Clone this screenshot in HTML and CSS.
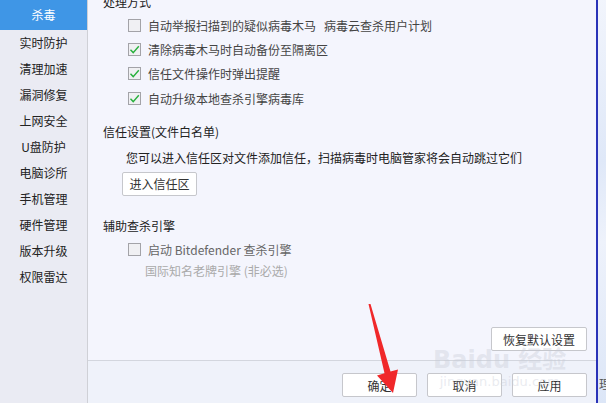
FILE: index.html
```html
<!DOCTYPE html>
<html lang="zh-CN">
<head>
<meta charset="utf-8">
<link rel="stylesheet" href="styles.css">
</head>
<body>
<div class="window">
  <nav class="sidebar">
    <div class="nav-item active">杀毒</div>
    <div class="nav-item">实时防护</div>
    <div class="nav-item">清理加速</div>
    <div class="nav-item">漏洞修复</div>
    <div class="nav-item">上网安全</div>
    <div class="nav-item">U盘防护</div>
    <div class="nav-item">电脑诊所</div>
    <div class="nav-item">手机管理</div>
    <div class="nav-item">硬件管理</div>
    <div class="nav-item">版本升级</div>
    <div class="nav-item">权限雷达</div>
  </nav>
  <main class="main">
    <section class="content">
      <div class="section-title first">处理方式</div>
      <div class="options">
        <label class="option"><span class="box"></span><span>自动举报扫描到的疑似病毒木马&nbsp;&nbsp;&nbsp;病毒云查杀用户计划</span></label>
        <label class="option"><span class="box checked"><svg viewBox="0 0 13 13" width="13" height="13"><path d="M2.5 6.8 L5.2 9.6 L10.8 3.2" fill="none" stroke="#27b03c" stroke-width="1.4"/></svg></span><span>清除病毒木马时自动备份至隔离区</span></label>
        <label class="option"><span class="box checked"><svg viewBox="0 0 13 13" width="13" height="13"><path d="M2.5 6.8 L5.2 9.6 L10.8 3.2" fill="none" stroke="#27b03c" stroke-width="1.4"/></svg></span><span>信任文件操作时弹出提醒</span></label>
        <label class="option"><span class="box checked"><svg viewBox="0 0 13 13" width="13" height="13"><path d="M2.5 6.8 L5.2 9.6 L10.8 3.2" fill="none" stroke="#27b03c" stroke-width="1.4"/></svg></span><span>自动升级本地查杀引擎病毒库</span></label>
      </div>
      <div class="section-title trust">信任设置(文件白名单)</div>
      <div class="desc">您可以进入信任区对文件添加信任，扫描病毒时电脑管家将会自动跳过它们</div>
      <button class="btn trust-btn">进入信任区</button>
      <div class="section-title engine">辅助查杀引擎</div>
      <label class="option disabled"><span class="box"></span><span>启动 Bitdefender 查杀引擎</span></label>
      <div class="sub">国际知名老牌引擎 (非必选)</div>
      <div class="reset-row"><button class="btn reset-btn">恢复默认设置</button></div>
    </section>
    <footer class="footer">
      <button class="btn foot-btn">确定</button>
      <button class="btn foot-btn">取消</button>
      <button class="btn foot-btn">应用</button>
    </footer>
    <div class="watermark"><span class="wm-big">Bai<span class="paw">du</span> 经验</span><span class="wm-small">jingyan.baidu.com</span></div>
    <svg class="arrow" width="606" height="403" viewBox="0 0 606 403">
      <polygon points="368.5,304 370.5,304 390.5,371.5 398,369.5 393,393 377,375.5 384.5,373.3" fill="#f0282a"/>
    </svg>
  </main>
  <aside class="edge"><span class="edge-text">理</span></aside>
</div>
</body>
</html>
```
FILE: styles.css
```css
html, body {
  margin: 0;
  padding: 0;
}
body {
  width: 606px;
  height: 403px;
  overflow: hidden;
  font-family: "Noto Sans CJK SC", "Noto Sans", sans-serif;
  font-size: 12px;
  color: #333;
}
.window {
  display: flex;
  height: 403px;
}
.sidebar {
  width: 87px;
  flex: none;
  background: #eaebf3;
  border-right: 1px solid #cfd0d6;
  display: flex;
  flex-direction: column;
}
.nav-item {
  height: 26px;
  line-height: 26px;
  text-align: center;
  color: #222;
  font-size: 12px;
}
.nav-item.active {
  height: 30px;
  line-height: 30px;
  background: #3f96e6;
  color: #fff;
}
.main {
  flex: 1;
  display: flex;
  flex-direction: column;
  background: #f4f5fd;
  position: relative;
}
.content {
  flex: 1;
  display: flex;
  flex-direction: column;
  padding: 0 9px 9px 15px;
}
.section-title {
  height: 18px;
  line-height: 18px;
  color: #222;
  font-size: 12px;
}
.section-title.first {
  margin-top: -7px;
}
.options {
  margin-top: 2px;
  display: flex;
  flex-direction: column;
}
.option {
  display: flex;
  align-items: center;
  height: 24.4px;
  padding-left: 25px;
  gap: 7px;
  color: #444;
}
.box {
  width: 11px;
  height: 11px;
  border: 1px solid #a3a3a8;
  background: #f0f0f3;
  flex: none;
  position: relative;
}
.box svg {
  position: absolute;
  left: -1px;
  top: -1px;
}
.section-title.trust {
  margin-top: 12px;
}
.desc {
  margin-top: 8px;
  padding-left: 23px;
  line-height: 18px;
  color: #222;
}
.btn {
  font-family: "Noto Sans CJK SC", "Noto Sans", sans-serif;
  font-size: 12px;
  color: #333;
  background: #fff;
  border: 1px solid #c6c7cc;
  border-radius: 2px;
  height: 24px;
  padding: 0;
}
.trust-btn {
  margin-top: 5px;
  margin-left: 19px;
  width: 75px;
  align-self: flex-start;
}
.section-title.engine {
  margin-top: 21px;
}
.option.disabled {
  margin-top: 3px;
  height: 24px;
  color: #666;
}
.sub {
  padding-left: 42px;
  line-height: 18px;
  color: #aaa;
}
.reset-row {
  margin-top: auto;
  display: flex;
  justify-content: flex-end;
}
.reset-btn {
  width: 96px;
}
.footer {
  flex: none;
  border-top: 1px solid #d3d6de;
  background: #eff2fa;
  display: flex;
  justify-content: flex-end;
  align-items: flex-start;
  gap: 10px;
  padding: 12px 9px 0 0;
  box-sizing: border-box;
  height: 43px;
}
.foot-btn {
  width: 75px;
}
.watermark {
  position: absolute;
  left: 345px;
  top: 346px;
  display: flex;
  flex-direction: column;
  align-items: center;
  pointer-events: none;
  color: rgba(200, 204, 215, 0.4);
}
.wm-big {
  font-family: "DejaVu Sans", "Noto Sans CJK SC", sans-serif;
  font-size: 24px;
  font-weight: bold;
  line-height: 28px;
}
.wm-small {
  font-family: "DejaVu Sans", sans-serif;
  font-size: 13px;
  line-height: 16px;
}
.arrow {
  position: absolute;
  left: -88px;
  top: 0;
  pointer-events: none;
}
.edge {
  width: 8px;
  flex: none;
  border-left: 2px solid #2a33b8;
  background: linear-gradient(160deg, #f2f5fc 0%, #dfe8f8 40%, #eef2fb 60%, #dce6f7 100%);
  overflow: hidden;
  position: relative;
}
.edge-text {
  position: absolute;
  left: 1px;
  top: 375px;
  font-size: 12px;
  color: #555;
}
```
